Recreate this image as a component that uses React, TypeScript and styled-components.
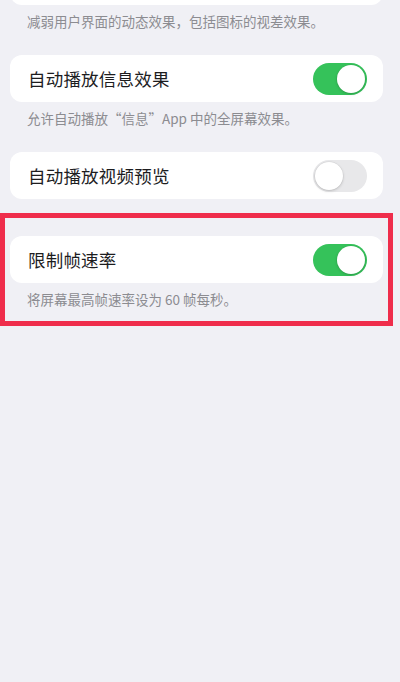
import React from "react";
import styled, { createGlobalStyle } from "styled-components";

const GlobalStyle = createGlobalStyle`
  html, body {
    margin: 0;
    padding: 0;
    background: #f0f0f5;
  }
  body {
    font-family: "Noto Sans CJK SC", "Noto Sans", sans-serif;
    -webkit-font-smoothing: antialiased;
  }
`;

type Row = {
  title?: string;
  caption?: string;
  on: boolean;
  highlight?: boolean;
};

// first row is scrolled off the top: only the bottom of its card shows
const rows: Row[] = [
  {
    caption: "减弱用户界面的动态效果，包括图标的视差效果。",
    on: false,
  },
  {
    title: "自动播放信息效果",
    caption: "允许自动播放“信息”App 中的全屏幕效果。",
    on: true,
  },
  { title: "自动播放视频预览", on: false },
  {
    title: "限制帧速率",
    caption: "将屏幕最高帧速率设为 60 帧每秒。",
    on: true,
    highlight: true,
  },
];

const App: React.FC = () => {
  return (
    <Root>
      <GlobalStyle />
      {rows.map((row, i) => {
        const inner = (
          <>
            <Card>
              {row.title && (
                <>
                  <Title>{row.title}</Title>
                  <Switch $on={row.on}>
                    <Knob $on={row.on} />
                  </Switch>
                </>
              )}
            </Card>
            {row.caption && <Caption>{row.caption}</Caption>}
          </>
        );
        return row.highlight ? (
          <Highlight key={i} $hasCaption={!!row.caption}>
            {inner}
          </Highlight>
        ) : (
          <Section key={i} $first={i === 0} $hasCaption={!!row.caption}>
            {inner}
          </Section>
        );
      })}
    </Root>
  );
};

const Root = styled.div`
  display: flex;
  flex-direction: column;
  padding: 0 17px 0 10px;
  min-height: 682px;
  box-sizing: border-box;
  overflow: hidden;
`;

const Section = styled.div<{ $first: boolean; $hasCaption: boolean }>`
  display: flex;
  flex-direction: column;
  margin-top: ${(p) => (p.$first ? "-42px" : "0")};
  margin-bottom: ${(p) => (p.$hasCaption ? "25px" : "37px")};
`;

const Highlight = styled(Section).attrs({ $first: false })`
  position: relative;

  &::after {
    content: "";
    position: absolute;
    top: -23px;
    left: -10px;
    right: -10px;
    bottom: -18px;
    border: 5px solid #ef2d4b;
    pointer-events: none;
  }
`;

const Card = styled.div`
  display: flex;
  align-items: center;
  justify-content: space-between;
  height: 47px;
  padding: 0 16px 0 18px;
  background: #ffffff;
  border-radius: 12px;
`;

const Title = styled.span`
  font-size: 17.5px;
  color: #1d1d1f;
  letter-spacing: 0.2px;
`;

const Caption = styled.div`
  padding: 7px 0 0 17px;
  font-size: 13.5px;
  line-height: 18px;
  color: #8c8c91;
`;

const Switch = styled.div<{ $on: boolean }>`
  position: relative;
  width: 54px;
  height: 32px;
  border-radius: 16px;
  background: ${(p) => (p.$on ? "#35c25a" : "#e8e8ea")};
  flex-shrink: 0;
`;

const Knob = styled.div<{ $on: boolean }>`
  position: absolute;
  top: 2px;
  left: ${(p) => (p.$on ? "24px" : "2px")};
  width: 28px;
  height: 28px;
  border-radius: 50%;
  background: #ffffff;
  box-shadow: 0 1px 3px rgba(0, 0, 0, 0.18), 0 0 0 0.5px rgba(0, 0, 0, 0.06);
`;

export default App;
